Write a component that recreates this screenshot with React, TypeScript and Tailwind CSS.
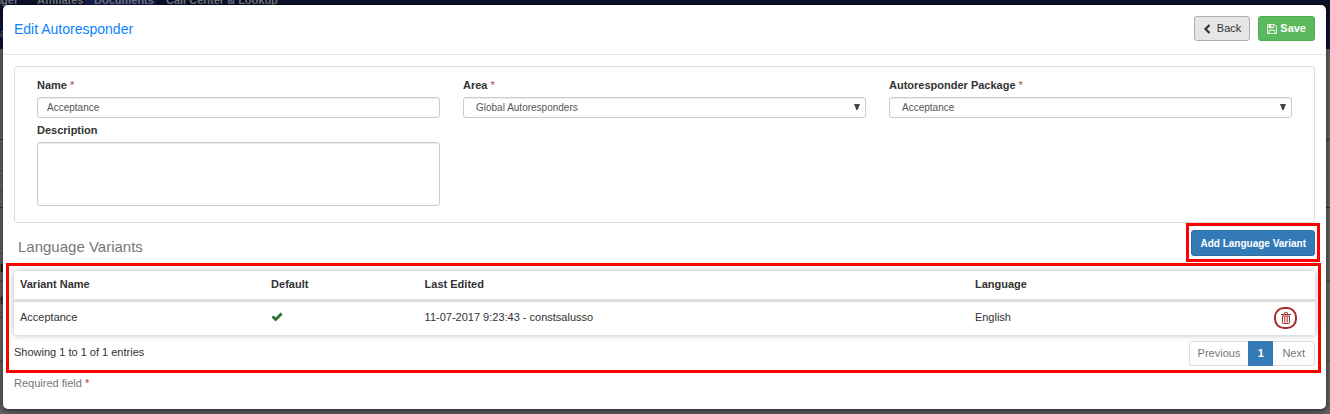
import React, { useState } from "react";

const navItems = [
  { label: "Manager", className: "-ml-[27px] w-[64px]" },
  { label: "Affiliates", className: "w-12" },
  { label: "Documents", className: "w-[71px] bg-[#141d49] px-[9px]" },
  { label: "Call Center & Lookup", className: "px-[10px]" },
];

const variants = [
  {
    name: "Acceptance",
    isDefault: true,
    edited: "11-07-2017 9:23:43 - constsalusso",
    language: "English",
  },
];

const ChevronIcon = () => (
  <svg viewBox="0 0 8 10" className="h-[10px] w-2" aria-hidden="true">
    <path d="M6.5 1 2.5 5l4 4" fill="none" stroke="currentColor" strokeWidth="2.2" />
  </svg>
);

const CheckIcon = () => (
  <svg viewBox="0 0 12 10" className="h-[10px] w-3 text-[#2d702f]" role="img" aria-label="Yes">
    <path d="M0.5 5.3 2.5 3.4 4.6 5.4 9.7 0.6 11.7 2.4 4.6 9.4z" fill="currentColor" />
  </svg>
);

const SaveIcon = () => (
  <svg viewBox="128 128 1536 1536" className="size-[10px]" fill="currentColor" aria-hidden="true">
    <path d="M512 1536h768v-384h-768v384zm896 0h128v-896q0-14-10-38.5t-20-34.5l-281-281q-10-10-34-20t-39-10v416q0 40-28 68t-68 28h-576q-40 0-68-28t-28-68v-416h-128v1280h128v-416q0-40 28-68t68-28h832q40 0 68 28t28 68v416zm-384-928v-320q0-13-9.5-22.5t-22.5-9.5h-192q-13 0-22.5 9.5t-9.5 22.5v320q0 13 9.5 22.5t22.5 9.5h192q13 0 22.5-9.5t9.5-22.5zm640 32v928q0 40-28 68t-68 28h-1344q-40 0-68-28t-28-68v-1344q0-40 28-68t68-28h928q40 0 88 20t76 48l280 280q28 28 48 76t20 88z" />
  </svg>
);

const TrashIcon = () => (
  <svg viewBox="0 0 10 12" className="h-3 w-[10px]" fill="none" stroke="currentColor" aria-hidden="true">
    <path d="M0 2.5h10M3.5 2.5v-1.2q0-.8.8-.8h1.4q.8 0 .8.8v1.2" />
    <path d="M1.5 4v6.7q0 .8.8.8h5.4q.8 0 .8-.8V4zM3.8 4.5v6M6.2 4.5v6" />
  </svg>
);

const Required = () => <span className="font-normal text-[#a94442]">*</span>;

const SelectField = ({ id, label, options }: { id: string; label: string; options: string[] }) => (
  <div>
    <label htmlFor={id} className="mb-1 block leading-4 font-bold">
      {label} <Required />
    </label>
    <div className="relative">
      <select
        id={id}
        className="block h-[21px] w-full appearance-none rounded-[3px] border border-[#ccc] bg-white pr-5 pl-3 text-[10px] text-[#555] shadow-[inset_0_1px_1px_rgba(0,0,0,0.075)]"
      >
        {options.map((option) => (
          <option key={option}>{option}</option>
        ))}
      </select>
      <svg
        viewBox="0 0 6 6"
        className="pointer-events-none absolute top-[7px] right-[6px] size-[6px] fill-[#444]"
        aria-hidden="true"
      >
        <path d="M0 0h6L3.6 6H2.4z" />
      </svg>
    </div>
  </div>
);

const PageBehind = () => (
  <div className="absolute inset-0 overflow-hidden bg-[#636363]" aria-hidden="true">
    <div className="flow-root h-[17px] bg-[#0b1029]">
      <div className="-mt-2 flex h-4 leading-4 font-bold text-[#70727c]">
        {navItems.map((item) => (
          <span key={item.label} className={`shrink-0 whitespace-nowrap ${item.className}`}>
            {item.label}
          </span>
        ))}
      </div>
    </div>
    <div className="h-8 bg-[#0c1438] leading-8 text-[#70727c]">a</div>
    <div className="h-[91px] border-b border-[#123a55] bg-[#5f6366]" />
    <div className="h-[31px] border-b border-[#4d4d4d]" />
    <div className="h-5 border-b border-[#4d4d4d]" />
    <div className="h-[17px] border-b border-[#123a55]" />
    <div className="h-[46px] border-b border-[#4d4d4d]" />
    <div className="h-7 border-b-2 border-[#505050] leading-7 font-bold text-[#151515]">E</div>
    <div className="h-9 border-b border-[#4d4d4d] leading-9 text-[#151515]">t</div>
    <div className="h-[43px] border-b border-[#4d4d4d]" />
    <div className="h-[43px] border-b border-[#4d4d4d]" />
  </div>
);

const App = () => {
  const [name, setName] = useState("Acceptance");
  const [description, setDescription] = useState("");

  return (
    <div className="relative min-h-screen px-[3px] pt-[5px] pr-1 pb-[5px] font-['Liberation_Sans',Arial,sans-serif] text-[11px] text-[#333]">
      <PageBehind />
      <main className="relative rounded-[5px] bg-white shadow-[0_2px_6px_rgba(0,0,0,0.6)]">
        <header className="flex h-[50px] items-center justify-between border-b border-[#e5e5e5] px-[11px] pb-[2px]">
          <h1 className="text-sm text-[#0a84ff]">Edit Autoresponder</h1>
          <div className="flex gap-2">
            <button
              type="button"
              className="flex h-[25px] items-center gap-[6px] rounded-[3px] border border-[#adadad] bg-[#e6e6e6] px-2"
            >
              <ChevronIcon />
              Back
            </button>
            <button
              type="submit"
              className="flex h-[25px] items-center gap-[3px] rounded-[3px] border border-[#4cae4c] bg-[#5cb85c] px-2 font-bold text-white"
            >
              <SaveIcon />
              Save
            </button>
          </div>
        </header>

        <div className="px-[11px] pt-[11px] pb-[18px]">
          <form className="grid grid-cols-3 gap-x-[23px] gap-y-1 rounded-[3px] border border-[#ddd] px-[22px] pt-[10px] pb-4">
            <div>
              <label htmlFor="name" className="mb-1 block leading-4 font-bold">
                Name <Required />
              </label>
              <input
                id="name"
                type="text"
                value={name}
                onChange={(e) => setName(e.target.value)}
                className="block h-[21px] w-full rounded-[3px] border border-[#ccc] px-[9px] text-[10px] text-[#555] shadow-[inset_0_1px_1px_rgba(0,0,0,0.075)]"
              />
            </div>
            <SelectField id="area" label="Area" options={["Global Autoresponders"]} />
            <SelectField id="package" label="Autoresponder Package" options={["Acceptance"]} />
            <div>
              <label htmlFor="description" className="mb-1 block leading-4 font-bold">
                Description
              </label>
              <textarea
                id="description"
                value={description}
                onChange={(e) => setDescription(e.target.value)}
                className="block h-16 w-full resize-none rounded-[3px] border border-[#ccc] px-[9px] py-1 text-[10px] text-[#555] shadow-[inset_0_1px_1px_rgba(0,0,0,0.075)]"
              />
            </div>
          </form>

          <div className="-mr-[5px] mb-px flex items-center justify-between pl-1">
            <h2 className="pt-[10px] text-[15px] text-[#777]">Language Variants</h2>
            <div className="border-3 border-[#f00] px-[2px] pt-1 pb-[3px]">
              <button
                type="button"
                className="block h-[26px] rounded-[3px] border border-[#2e6da4] bg-[#337ab7] px-2 text-[10px] font-bold text-white"
              >
                Add Language Variant
              </button>
            </div>
          </div>

          <section className="-mr-[6px] -ml-2 border-3 border-[#f00] pt-[5px] pr-[3px] pb-1 pl-[5px]">
            <div className="overflow-hidden rounded-[3px] shadow-[0_0_6px_rgba(0,0,0,0.3)]">
              <table className="w-full table-fixed border-collapse text-left">
                <thead>
                  <tr className="h-[29px] border-b-3 border-[#ddd]">
                    <th className="w-[19.3%] px-[6px] pb-[2px]">Variant Name</th>
                    <th className="w-[11.8%] px-[6px] pb-[2px]">Default</th>
                    <th className="w-[42.3%] px-[6px] pb-[2px]">Last Edited</th>
                    <th className="px-[6px] pb-[2px]">Language</th>
                    <td className="w-14" />
                  </tr>
                </thead>
                <tbody>
                  {variants.map((variant) => (
                    <tr key={variant.name} className="h-[35px]">
                      <td className="px-[6px] pb-[2px]">{variant.name}</td>
                      <td className="px-[6px] pb-[2px]">{variant.isDefault && <CheckIcon />}</td>
                      <td className="px-[6px] pb-[2px]">{variant.edited}</td>
                      <td className="px-[6px] pb-[2px]">{variant.language}</td>
                      <td className="pr-[18px]">
                        <button
                          type="button"
                          aria-label={`Delete ${variant.name}`}
                          className="ml-auto flex h-[22px] w-[23px] items-center justify-center rounded-[10px] border-2 border-[#a52a2a] text-[#a52a2a]"
                        >
                          <TrashIcon />
                        </button>
                      </td>
                    </tr>
                  ))}
                </tbody>
              </table>
            </div>
            <div className="mt-[6px] flex items-center justify-between">
              <p className="pb-[2px]">Showing 1 to 1 of 1 entries</p>
              <nav className="flex h-[25px] text-[#777]" aria-label="Pagination">
                <button type="button" className="rounded-l-[3px] border border-r-0 border-[#ddd] px-2">
                  Previous
                </button>
                <button type="button" aria-current="page" className="w-[25px] bg-[#337ab7] font-bold text-white">
                  1
                </button>
                <button type="button" className="rounded-r-[3px] border border-l-0 border-[#ddd] px-[9px]">
                  Next
                </button>
              </nav>
            </div>
          </section>

          <p className="mt-[2px] leading-4 text-[#777]">
            Required field <span className="text-[#c9302c]">*</span>
          </p>
        </div>
      </main>
    </div>
  );
};

export default App;
